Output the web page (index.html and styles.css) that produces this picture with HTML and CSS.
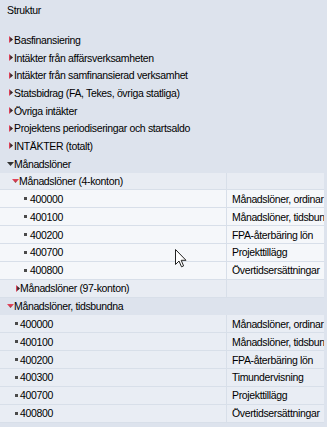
FILE: index.html
```html
<!DOCTYPE html>
<html>
<head>
<meta charset="utf-8">
<link rel="stylesheet" href="styles.css">
</head>
<body>
<div class="panel">
  <div class="title">Struktur</div>
  <div class="tree">
    <div class="node l0"><span class="ic"><svg class="tr" width="4" height="7" viewBox="0 0 4 7"><defs><linearGradient id="g1" x1="0" x2="1" y1="0" y2="0"><stop offset="0" stop-color="#e8465e"/><stop offset="0.3" stop-color="#c8384c"/><stop offset="0.4" stop-color="#3a2a2e"/><stop offset="1" stop-color="#222"/></linearGradient></defs><polygon points="0,0 4,3.5 0,7" fill="url(#g1)"/></svg></span>Basfinansiering</div>
    <div class="node l0"><span class="ic"><svg class="tr" width="4" height="7" viewBox="0 0 4 7"><polygon points="0,0 4,3.5 0,7" fill="url(#g1)"/></svg></span>Intäkter från affärsverksamheten</div>
    <div class="node l0"><span class="ic"><svg class="tr" width="4" height="7" viewBox="0 0 4 7"><polygon points="0,0 4,3.5 0,7" fill="url(#g1)"/></svg></span>Intäkter från samfinansierad verksamhet</div>
    <div class="node l0"><span class="ic"><svg class="tr" width="4" height="7" viewBox="0 0 4 7"><polygon points="0,0 4,3.5 0,7" fill="url(#g1)"/></svg></span>Statsbidrag (FA, Tekes, övriga statliga)</div>
    <div class="node l0"><span class="ic"><svg class="tr" width="4" height="7" viewBox="0 0 4 7"><polygon points="0,0 4,3.5 0,7" fill="url(#g1)"/></svg></span>Övriga intäkter</div>
    <div class="node l0"><span class="ic"><svg class="tr" width="4" height="7" viewBox="0 0 4 7"><polygon points="0,0 4,3.5 0,7" fill="url(#g1)"/></svg></span>Projektens periodiseringar och startsaldo</div>
    <div class="node l0"><span class="ic"><svg class="tr" width="4" height="7" viewBox="0 0 4 7"><polygon points="0,0 4,3.5 0,7" fill="url(#g1)"/></svg></span>INTÄKTER (totalt)</div>
    <div class="node l0"><span class="ic"><svg class="td" width="7" height="4" viewBox="0 0 7 4"><polygon points="0,0 7,0 3.5,4" fill="#333"/></svg></span>Månadslöner</div>
  </div>
  <div class="grid">
    <div class="row grp">
      <div class="c1 l1"><span class="ic"><svg class="td" width="7" height="4" viewBox="0 0 7 4"><defs><linearGradient id="g2" x1="0" x2="0" y1="0" y2="1"><stop offset="0" stop-color="#e8465e"/><stop offset="0.6" stop-color="#c8384c"/><stop offset="1" stop-color="#553"/></linearGradient></defs><polygon points="0,0 7,0 3.5,4" fill="url(#g2)"/></svg></span>Månadslöner (4-konton)</div>
      <div class="c2"></div>
    </div>
    <div class="row leaf"><div class="c1 l2"><span class="bl"></span>400000</div><div class="c2">Månadslöner, ordinar</div></div>
    <div class="row leaf"><div class="c1 l2"><span class="bl"></span>400100</div><div class="c2">Månadslöner, tidsbundna</div></div>
    <div class="row leaf"><div class="c1 l2"><span class="bl"></span>400200</div><div class="c2">FPA-återbäring lön</div></div>
    <div class="row leaf"><div class="c1 l2"><span class="bl"></span>400700</div><div class="c2">Projekttillägg</div></div>
    <div class="row leaf"><div class="c1 l2"><span class="bl"></span>400800</div><div class="c2">Övertidsersättningar</div></div>
    <div class="row grp">
      <div class="c1 l1b"><span class="ic"><svg class="tr" width="4" height="7" viewBox="0 0 4 7"><polygon points="0,0 4,3.5 0,7" fill="url(#g1)"/></svg></span>Månadslöner (97-konton)</div>
      <div class="c2"></div>
    </div>
    <div class="row band">
      <div class="full l0"><span class="ic"><svg class="td" width="7" height="4" viewBox="0 0 7 4"><polygon points="0,0 7,0 3.5,4" fill="url(#g2)"/></svg></span>Månadslöner, tidsbundna</div>
    </div>
    <div class="row leaf2"><div class="c1 l2b"><span class="bl"></span>400000</div><div class="c2">Månadslöner, ordinar</div></div>
    <div class="row leaf2"><div class="c1 l2b"><span class="bl"></span>400100</div><div class="c2">Månadslöner, tidsbundna</div></div>
    <div class="row leaf2"><div class="c1 l2b"><span class="bl"></span>400200</div><div class="c2">FPA-återbäring lön</div></div>
    <div class="row leaf2"><div class="c1 l2b"><span class="bl"></span>400300</div><div class="c2">Timundervisning</div></div>
    <div class="row leaf2"><div class="c1 l2b"><span class="bl"></span>400700</div><div class="c2">Projekttillägg</div></div>
    <div class="row leaf2"><div class="c1 l2b"><span class="bl"></span>400800</div><div class="c2">Övertidsersättningar</div></div>
  </div>
  <svg class="cursor" width="12" height="19" viewBox="0 0 12 19"><path d="M0.5,0.5 L0.5,15.5 L4,12 L6.5,17.8 L8.6,16.9 L6.2,11.3 L11,11.3 Z" fill="#fff" stroke="#222" stroke-width="1" stroke-linejoin="round"/></svg>
</div>
</body>
</html>
```

FILE: styles.css
```css
html, body {
  margin: 0;
  padding: 0;
  background: #dde3ed;
}
body {
  width: 327px;
  height: 427px;
  overflow: hidden;
  font-family: "Liberation Sans", Arial, sans-serif;
  font-size: 10.5px;
  letter-spacing: -0.35px;
  color: #000;
}
.panel {
  position: relative;
  height: 427px;
}
.title {
  height: 31px;
  padding-left: 7px;
  line-height: 20px;
}
.tree .node {
  height: 17.7px;
  display: flex;
  align-items: center;
  white-space: nowrap;
}
.l0 { padding-left: 7px; }
.ic {
  width: 7px;
  display: inline-flex;
  align-items: center;
  flex: none;
}
.ic .tr { margin-left: 2px; }
.grid {
  width: 324px;
}
.row {
  display: flex;
  height: 17.86px;
  box-sizing: border-box;
  border-bottom: 1px solid #d8dfe9;
}
.row > div {
  display: flex;
  align-items: center;
  white-space: nowrap;
  overflow: hidden;
}
.c1 {
  width: 227px;
  flex: none;
  box-sizing: border-box;
  border-right: 1px solid #d8dfe9;
}
.c2 {
  flex: 1;
  padding-left: 5px;
}
.full { flex: 1; }
.grp { background: #e8ecf3; }
.leaf { background: #f5f7fa; }
.band { background: #dde3ed; border-bottom-color: #dde3ed; }
.leaf2 { background: #e9edf4; }
.l1 { padding-left: 12px; }
.l1b { padding-left: 13px; }
.l2 { padding-left: 24px; }
.l2b { padding-left: 15px; }
.l1b .ic .tr { margin-left: 3px; }
.bl {
  width: 3px;
  height: 3px;
  background: #4a4a4a;
  margin-right: 3px;
  flex: none;
}
.l2b .bl { margin-right: 2px; }
.cursor {
  position: absolute;
  left: 175px;
  top: 249px;
}
```
